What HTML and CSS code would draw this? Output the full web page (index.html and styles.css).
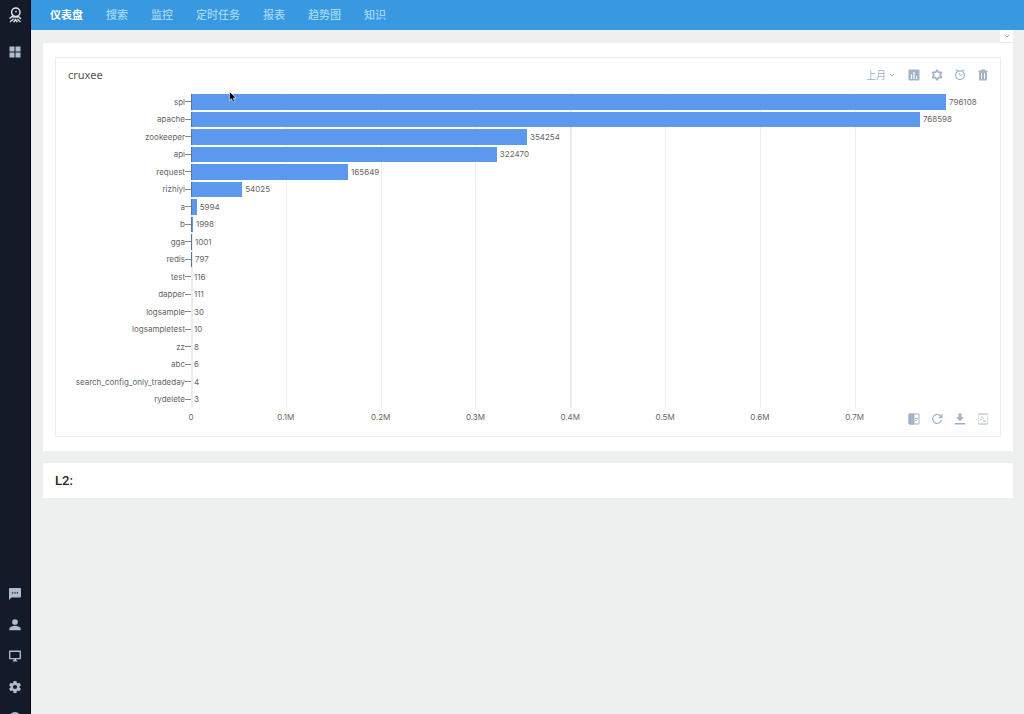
FILE: index.html
```html
<!DOCTYPE html>
<html lang="zh-CN">
<head>
<meta charset="utf-8">
<title>仪表盘</title>
<link rel="stylesheet" href="styles.css">
</head>
<body>
<div class="app">
  <aside class="sidebar">
    <a class="side-link logo" href="#" aria-label="Home"><svg viewBox="0 0 16 16" width="16" height="16" fill="none" stroke="#dfe6ec" stroke-width="1.4" stroke-linecap="round"><circle cx="8.800" cy="5.200" r="4.200"/><circle cx="9" cy="4.600" r=".9" fill="#dfe6ec" stroke="none"/><path d="M6 8.500 3 11.200M3.500 14.500l2.700-2.300M7 14.800l1.300-2.200 1.700 2.200M10.500 12.200l2.500 2.300M11 9l2.500 2.500M6 10h4.600"/></svg></a>
    <a class="side-link apps" href="#" aria-label="Apps"><svg viewBox="0 0 12 12" width="12" height="12" fill="currentColor"><path d="M.5.5h5v5h-5zM6.500.5h5v5h-5zM.5 6.500h5v5h-5zM6.500 6.500h5v5h-5z"/></svg></a>
    <div class="side-bottom">
      <a class="side-link" href="#" aria-label="Messages"><svg viewBox="2 2 20 20" width="12" height="12" fill="currentColor"><path d="M20 2H4c-1.100 0-2 .9-2 2v18l4-4h14c1.100 0 2-.9 2-2V4c0-1.100-.9-2-2-2zM9 11H7V9h2v2zm4 0h-2V9h2v2zm4 0h-2V9h2v2z"/></svg></a>
      <a class="side-link" href="#" aria-label="User"><svg viewBox="3 3 18 18" width="12" height="12" fill="currentColor"><circle cx="12" cy="7.500" r="4.300"/><path d="M3.500 20v-2.500c0-3 5.500-4.500 8.500-4.500s8.500 1.500 8.500 4.500V20z"/></svg></a>
      <a class="side-link" href="#" aria-label="Monitor"><svg viewBox="1 1 22 22" width="12" height="12" fill="currentColor"><path d="M21 2H3c-1.100 0-2 .9-2 2v12c0 1.100.9 2 2 2h7v2H8v2h8v-2h-2v-2h7c1.100 0 2-.9 2-2V4c0-1.100-.9-2-2-2zm-.5 13.500h-17v-11h17v11z"/></svg></a>
      <a class="side-link" href="#" aria-label="Settings"><svg viewBox="2 2 20 20" width="12" height="12" fill="currentColor"><path d="M19.430 12.980c.04-.32.070-.64.070-.98s-.03-.66-.07-.98l2.110-1.650c.19-.15.240-.42.120-.64l-2-3.460c-.12-.22-.39-.3-.61-.22l-2.490 1c-.52-.4-1.080-.73-1.690-.98l-.38-2.650C14.460 2.180 14.250 2 14 2h-4c-.25 0-.46.180-.49.420l-.38 2.650c-.61.250-1.170.590-1.690.980l-2.490-1c-.23-.09-.49 0-.61.220l-2 3.460c-.13.220-.07.490.120.640l2.110 1.650c-.04.320-.07.650-.07.980s.03.660.070.980l-2.110 1.650c-.19.150-.24.420-.12.640l2 3.460c.12.220.390.300.610.220l2.490-1c.52.400 1.080.730 1.690.980l.38 2.650c.03.240.240.420.490.420h4c.25 0 .46-.18.490-.42l.38-2.650c.61-.25 1.170-.59 1.690-.98l2.490 1c.23.090.490 0 .61-.22l2-3.460c.12-.22.070-.49-.12-.64l-2.110-1.650zM12 15.500a3.500 3.500 0 1 1 0-7 3.500 3.500 0 0 1 0 7z"/></svg></a>
      <a class="side-link" href="#" aria-label="Help"><svg viewBox="0 0 12 12" width="12" height="12" fill="currentColor"><circle cx="6" cy="6" r="6"/></svg></a>
    </div>
  </aside>
  <div class="page">
    <nav class="topnav">
      <a class="active" href="#">仪表盘</a><a href="#">搜索</a><a href="#">监控</a><a href="#">定时任务</a><a href="#">报表</a><a href="#">趋势图</a><a href="#">知识</a>
    </nav>
    <main class="content">
      <button class="expand" aria-label="Expand"><svg viewBox="0 0 8 8" width="8" height="8" fill="none" stroke="#a9b1b8"><path d="M1.500 2.500 4 5l2.500-2.500"/></svg></button>
      <section class="panel">
        <article class="widget">
          <header class="widget-head">
            <h2>cruxee</h2>
            <button class="period">上月<svg viewBox="0 0 8 8" width="8" height="8" fill="none" stroke="currentColor"><path d="M2 3l2 2 2-2"/></svg></button>
            <div class="tools">
              <button aria-label="Chart type"><svg viewBox="0 0 12 12" width="12" height="12"><rect x=".5" y=".5" width="11" height="11" rx="1" fill="currentColor"/><path stroke="#fff" stroke-width="1.200" d="M3.500 10V5.500M6 10V3M8.500 10V7"/></svg></button>
              <button aria-label="Settings"><svg viewBox="0 0 12 12" width="12" height="12" fill="none" stroke="currentColor"><path stroke-width="1.800" stroke-linejoin="round" d="M6 1.200l1.500 2.100 2.800.1L9.200 6l1.100 2.600-2.800.1L6 10.800 4.500 8.700l-2.800-.1L2.800 6 1.700 3.400l2.800-.1z"/></svg></button>
              <button aria-label="Refresh interval"><svg viewBox="0 0 12 12" width="12" height="12" fill="none" stroke="currentColor"><circle cx="6" cy="6.200" r="4.400" stroke-width="1.200"/><path d="M1.500 1.200h2.500M8 1.200h2.500M5 4l1.200 2.800L7.800 5"/></svg></button>
              <button aria-label="Delete"><svg viewBox="0 0 12 12" width="12" height="12" fill="currentColor"><path d="M4 .5h4v1h2.500V3h-9V1.500H4zM2 3h8v8.500H2z"/><path stroke="#fff" d="M4.500 4v6M7.500 4v6"/></svg></button>
            </div>
          </header>
          <div class="chart">
            <div class="gridlines"><i class="axis"></i><i></i><i></i><i></i><i class="strong"></i><i></i><i></i><i></i></div>
            <ol class="rows">
              <li><span class="name">spl</span><span class="track"><b style="width:100%"></b><em>796108</em></span></li>
              <li><span class="name">apache</span><span class="track"><b style="width:96.54%"></b><em>768598</em></span></li>
              <li><span class="name">zookeeper</span><span class="track"><b style="width:44.5%"></b><em>354254</em></span></li>
              <li><span class="name">api</span><span class="track"><b style="width:40.51%"></b><em>322470</em></span></li>
              <li><span class="name">request</span><span class="track"><b style="width:20.81%"></b><em>165649</em></span></li>
              <li><span class="name">rizhiyi</span><span class="track"><b style="width:6.79%"></b><em>54025</em></span></li>
              <li><span class="name">a</span><span class="track"><b style="width:.75%"></b><em>5994</em></span></li>
              <li><span class="name">b</span><span class="track"><b style="width:.25%"></b><em>1998</em></span></li>
              <li><span class="name">gga</span><span class="track"><b style="width:.13%"></b><em>1001</em></span></li>
              <li><span class="name">redis</span><span class="track"><b style="width:.1%"></b><em>797</em></span></li>
              <li><span class="name">test</span><span class="track"><em>116</em></span></li>
              <li><span class="name">dapper</span><span class="track"><em>111</em></span></li>
              <li><span class="name">logsample</span><span class="track"><em>30</em></span></li>
              <li><span class="name">logsampletest</span><span class="track"><em>10</em></span></li>
              <li><span class="name">zz</span><span class="track"><em>8</em></span></li>
              <li><span class="name">abc</span><span class="track"><em>6</em></span></li>
              <li><span class="name">search_config_only_tradeday</span><span class="track"><em>4</em></span></li>
              <li><span class="name">rydelete</span><span class="track"><em>3</em></span></li>
            </ol>
          </div>
          <div class="scale"><span>0</span><span>0.1M</span><span>0.2M</span><span>0.3M</span><span>0.4M</span><span>0.5M</span><span>0.6M</span><span>0.7M</span></div>
          <div class="tools corner">
            <button aria-label="Layout"><svg viewBox="0 0 12 12" width="12" height="12" fill="none" stroke="currentColor"><path d="M1 1h10v10H1z"/><path fill="currentColor" d="M1 1h5v10H1z"/><path d="M7 5.500h3M7 7.500h2"/></svg></button>
            <button aria-label="Refresh"><svg viewBox="0 0 12 12" width="12" height="12" fill="none" stroke="currentColor" stroke-width="1.200"><path d="M9.600 3A4.500 4.500 0 1 0 10.500 7"/><path fill="currentColor" stroke="none" d="M11.500.8v4.400H7z"/></svg></button>
            <button aria-label="Download"><svg viewBox="0 0 12 12" width="12" height="12" fill="currentColor"><path d="M4.500.5h3V4H10L6 8.200 2 4h2.500zM.5 10h11v1.500H.5z"/></svg></button>
            <button aria-label="Open search"><svg viewBox="0 0 12 12" width="12" height="12" fill="none" stroke="currentColor"><path stroke-opacity=".4" d="M1.500 1v10M10.500 1v10"/><path d="M1.500 1h9M1.500 11h9M4 3.500l2.500 2M6 8h3M3.500 7l1.500-1"/></svg></button>
          </div>
        </article>
      </section>
      <section class="panel note">L2:</section>
    </main>
  </div>
</div>
<svg class="pointer" viewBox="0 0 8 12" width="8" height="12"><path d="M.5.5v9l2-1.800 1.500 3.500 1.500-.7L4.200 7H7z" fill="#000" stroke="#fff" stroke-width=".6"/></svg>
</body>
</html>
```
FILE: styles.css
```css
* { box-sizing: border-box; }
body { margin: 0; background: #eef0f0; color: #666; font-family: Roboto, "Noto Sans CJK SC", sans-serif; }
button { border: 0; padding: 0; background: none; color: inherit; font: inherit; }
svg { display: block; }
a { color: inherit; text-decoration: none; }

.app { display: flex; height: 100vh; overflow: hidden; }
.sidebar { flex: 0 0 31px; display: flex; flex-direction: column; background: #151a29; border-right: 1px solid #030514; color: #aebdcd; overflow: hidden; }
.side-link { flex: none; display: flex; align-items: center; justify-content: center; height: 31px; }
.logo { height: 29px; }
.apps { margin-top: 7px; }
.side-bottom { margin-top: auto; margin-bottom: -19px; }

.page { flex: 1; min-width: 0; }
.topnav { display: flex; align-items: center; gap: 23px; height: 30px; padding: 0 0 2px 19px; background: #3898e0; color: #a5d9fa; font-size: 11px; font-weight: 500; }
.topnav .active { color: #fff; font-weight: 700; }

.content { position: relative; display: flex; flex-direction: column; gap: 12px; padding: 13px 11px 12px 12px; }
.expand { position: absolute; top: 0; right: 11px; display: grid; place-items: center; width: 13px; height: 13px; background: #fff; border-bottom: 1px solid #e8eaeb; }
.panel { padding: 14px 12px; background: #fff; }
.note { padding: 0 12px; line-height: 35px; font-size: 13px; font-weight: 500; color: #222; }

.widget { position: relative; height: 380px; border: 1px solid #eceeee; }
.widget-head { display: flex; align-items: center; height: 35px; padding: 0 11px 2px 12px; color: #a3b3c8; }
.widget-head h2 { margin: 0 auto 0 0; font-family: "Noto Sans", sans-serif; font-size: 11px; font-weight: 400; color: #555; }
.period { display: flex; align-items: center; gap: 2px; margin-right: 12px; font-size: 10px; }
.tools { display: flex; gap: 11px; color: #a3b3c8; }
.corner { position: absolute; right: 11px; bottom: 11px; }

.chart { position: relative; font-family: Inter, sans-serif; font-size: 8px; line-height: 10px; }
.gridlines { position: absolute; inset: 0 54px 0 135px; display: flex; }
.gridlines i { flex: 0 0 12.56%; border-left: 1px solid #eee; }
.gridlines .axis, .gridlines .strong { border-left: 2px solid #ececec; }
.rows { position: relative; display: grid; grid-template-rows: repeat(18, 1fr); height: 315px; margin: 0; padding: 0; list-style: none; }
.rows li { display: grid; grid-template-columns: 135px 1fr; padding-right: 54px; align-items: center; min-height: 0; }
.name { display: flex; align-items: center; justify-content: flex-end; white-space: nowrap; }
.name::after { content: ""; width: 6px; height: 1px; background: #888; }
.track { display: flex; align-items: center; height: 100%; padding: 1px 0; }
.track b { flex: none; height: 100%; background: #5b98ee; border-left: 1px solid #557799; }
.track em { padding-left: 3px; font-style: normal; }
.scale { display: flex; padding: 3px 54px 0 135px; font-family: Inter, sans-serif; font-size: 8px; line-height: 12px; text-align: center; }
.scale span { flex: 0 0 12.56%; }
.scale span:first-child { margin-left: -6.28%; }

.pointer { position: absolute; left: 229px; top: 91px; }
```
